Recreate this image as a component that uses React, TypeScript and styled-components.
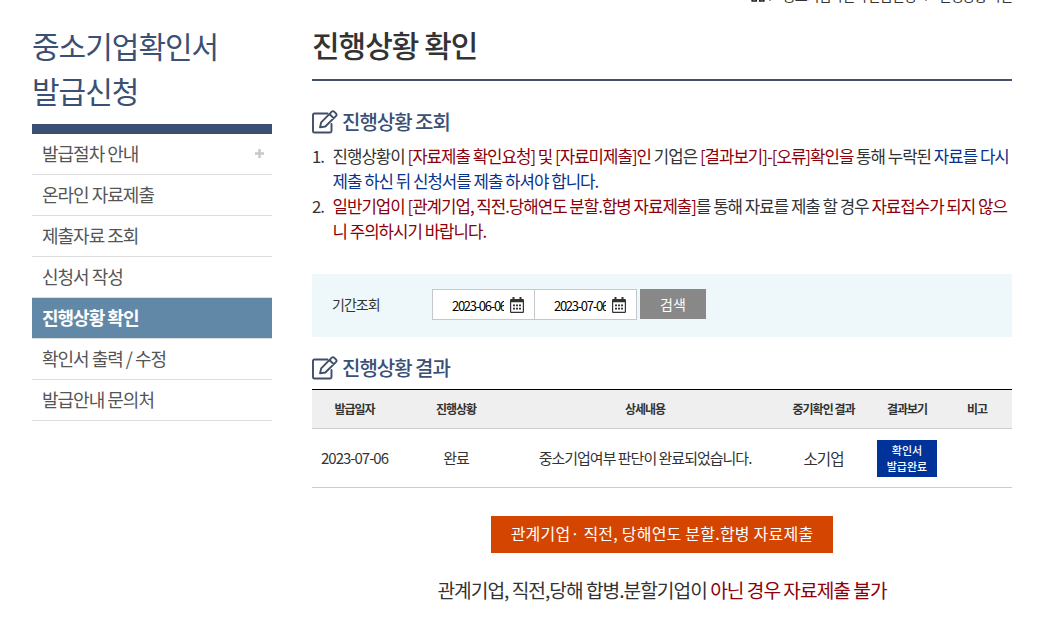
import React, { useState } from "react";
import styled, { createGlobalStyle } from "styled-components";

const GlobalStyle = createGlobalStyle`
  * {
    box-sizing: border-box;
  }

  body {
    margin: 0;
    background: #fff;
    color: #333;
    font-family: "Noto Sans CJK KR", "Noto Sans", sans-serif;
    letter-spacing: -1px;
    overflow: hidden;
  }

  button,
  input {
    font-family: inherit;
  }
`;

// 레이아웃
const Page = styled.div`
  display: flex;
  gap: 40px;
  width: 1014px;
  height: 628px;
  padding-left: 32px;
  overflow: hidden;
`;

const Sidebar = styled.aside`
  width: 240px;
  flex-shrink: 0;
  padding-top: 23px;
`;

const SidebarTitle = styled.h2`
  margin: 0;
  height: 101px;
  font-size: 30px;
  font-weight: 400;
  line-height: 45px;
  color: #3a5074;
`;

const Menu = styled.ul`
  list-style: none;
  margin: 0;
  padding: 0;
  border-top: 10px solid #3a5074;
`;

const MenuItem = styled.li<{ $active?: boolean }>`
  display: flex;
  align-items: center;
  justify-content: space-between;
  height: 41px;
  padding: 0 8px 2px 10px;
  border-bottom: 1px solid #ddd;
  font-size: 18px;
  font-weight: ${({ $active }) => ($active ? 700 : 400)};
  color: ${({ $active }) => ($active ? "#fff" : "#555")};
  background: ${({ $active }) => ($active ? "#6288a8" : "transparent")};
  cursor: pointer;
`;

const Content = styled.main`
  width: 700px;
  flex-shrink: 0;
`;

const Breadcrumb = styled.div`
  display: flex;
  align-items: center;
  justify-content: flex-end;
  gap: 8px;
  height: 20px;
  margin-top: -15px;
  font-size: 14px;
  line-height: 20px;
  white-space: nowrap;
`;

const PageTitle = styled.h1`
  margin: 0 0 26px;
  height: 76px;
  padding-top: 17px;
  border-bottom: 2px solid #444f68;
  font-size: 30px;
  font-weight: 500;
  line-height: 45px;
`;

const SectionTitle = styled.h3`
  display: flex;
  align-items: center;
  gap: 4px;
  margin: 0;
  height: 30px;
  font-size: 20px;
  font-weight: 500;
  line-height: 30px;
  color: #3a5074;
`;

// 안내 문구
const NoticeList = styled.ol`
  list-style: none;
  margin: 7px 0 0;
  padding: 0;
  font-size: 16.8px;
  line-height: 25px;
`;

const NoticeItem = styled.li`
  display: grid;
  grid-template-columns: 20.5px 1fr;
  white-space: nowrap;
`;

const Red = styled.span`
  color: #8c0009;
`;

const Blue = styled.span`
  color: #0a3289;
`;

// 조회 조건
const SearchBox = styled.form`
  display: flex;
  align-items: center;
  height: 63px;
  margin: 30px 0 16px;
  padding: 0 20px 2px;
  background: #eef7fa;
`;

const SearchLabel = styled.label`
  width: 100px;
  padding-bottom: 1px;
  font-size: 14px;
`;

const DateField = styled.div`
  display: flex;
  align-items: center;
  gap: 5px;
  width: 103px;
  height: 31px;
  padding: 2px 0 0 19px;
  border: 1px solid #c3c8cc;
  background: #fff;

  & + & {
    margin-left: -1px;
  }
`;

const DateInput = styled.input`
  width: 52px;
  padding: 0 0 1px;
  border: 0;
  outline: 0;
  font-size: 13px;
  letter-spacing: -1.3px;
  color: #000;
`;

const SearchButton = styled.button`
  width: 66px;
  height: 30px;
  margin: 0 0 1px 3px;
  padding: 0 0 1px;
  border: 0;
  background: #888;
  color: #fff;
  font-size: 14px;
`;

// 결과 테이블
const Table = styled.table`
  width: 100%;
  margin-top: 6px;
  border-collapse: collapse;
  table-layout: fixed;
  border-top: 1px solid #000;
  text-align: center;
`;

const Th = styled.th<{ $width: number }>`
  width: ${({ $width }) => $width}px;
  height: 39px;
  padding: 0 0 1px;
  border-bottom: 1px solid #ccc;
  background: #efefef;
  font-size: 12px;
  font-weight: 700;
`;

const Td = styled.td<{ $large?: boolean }>`
  height: 59px;
  padding: 0 0 1px;
  border-bottom: 1px solid #ccc;
  font-size: ${({ $large }) => ($large ? 15.6 : 15)}px;
`;

const ResultButton = styled.button`
  display: block;
  width: 60px;
  height: 37px;
  margin: 1px auto 0;
  padding: 0 0 1px;
  border: 0;
  background: #003399;
  color: #fff;
  font-size: 11px;
  font-weight: 500;
  line-height: 16px;
`;

const Bottom = styled.div`
  display: flex;
  flex-direction: column;
  align-items: center;
  margin-top: 28px;
`;

const SubmitButton = styled.button`
  width: 342px;
  height: 37px;
  padding: 0 0 3px;
  border: 0;
  background: #d34500;
  color: #fff;
  font-size: 16px;
  letter-spacing: 0.22px;
  white-space: nowrap;
`;

const BottomNotice = styled.p`
  margin: 23px 0 0;
  font-size: 19.2px;
  line-height: 28px;
`;

const EditIcon = () => (
  <svg width="26" height="25" viewBox="0 0 26 25" fill="none" stroke="#3f4d68">
    <path
      d="M15.5 3.5H2.3A1.3 1.3 0 0 0 1 4.8v16.4A1.3 1.3 0 0 0 2.3 22.5H18a1.5 1.5 0 0 0 1.5-1.5V14"
      strokeWidth="1.9"
      strokeLinecap="round"
    />
    <path
      d="M8 17.4l1.2-5L19.8 1.6a1.6 1.6 0 0 1 2.3 0l2 2a1.6 1.6 0 0 1 0 2.3L13.3 16.5zM17.5 4l4.3 4.3"
      strokeWidth="1.9"
      strokeLinejoin="round"
    />
  </svg>
);

const CalendarIcon = () => (
  <svg width="16" height="17" viewBox="0 0 16 17" fill="#333">
    <path
      fillRule="evenodd"
      d="M3.5 0h2v2h5V0h2v2h1.2A1.3 1.3 0 0 1 15 3.3v11.4a1.3 1.3 0 0 1-1.3 1.3H2.3A1.3 1.3 0 0 1 1 14.7V3.3A1.3 1.3 0 0 1 2.3 2h1.2zM2.2 5.2v9.6h11.6V5.2z"
    />
    <path d="M4 7.5h2v1.8H4zM7 7.5h2v1.8H7zM10 7.5h2v1.8h-2zM4 10.8h2v1.8H4zM7 10.8h2v1.8H7zM10 10.8h2v1.8h-2z" />
  </svg>
);

const PlusIcon = () => (
  <svg width="9" height="9" viewBox="0 0 9 9">
    <path d="M4.5 0v9M0 4.5h9" stroke="#c8c8c8" strokeWidth="2.5" />
  </svg>
);

const HomeIcon = styled(({ className }: { className?: string }) => (
  <svg
    className={className}
    width="14"
    height="14"
    viewBox="0 0 14 14"
    fill="none"
    stroke="#222"
  >
    <path
      d="M.8 6.5L7 1l6.2 5.5M1.2 6v7h4V8.5h3.6V13h4V6"
      strokeWidth="1.7"
    />
  </svg>
))`
  margin-right: -5px;
`;

const ArrowIcon = () => (
  <svg width="7" height="14" viewBox="0 0 7 14" fill="none" stroke="#333">
    <path d="M1.5 5.5l4 3.5-4 3.5" strokeWidth="1.2" />
  </svg>
);

const menus = [
  "발급절차 안내",
  "온라인 자료제출",
  "제출자료 조회",
  "신청서 작성",
  "진행상황 확인",
  "확인서 출력 / 수정",
  "발급안내 문의처",
];

const columns = [
  { label: "발급일자", width: 85 },
  { label: "진행상황", width: 118 },
  { label: "상세내용", width: 260 },
  { label: "중기확인 결과", width: 97 },
  { label: "결과보기", width: 70 },
  { label: "비고", width: 70 },
];

const App: React.FC = () => {
  const [startDate, setStartDate] = useState("2023-06-06");
  const [endDate, setEndDate] = useState("2023-07-06");

  return (
    <>
      <GlobalStyle />
      <Page>
        <Sidebar>
          <SidebarTitle>
            중소기업확인서
            <br />
            발급신청
          </SidebarTitle>
          <Menu>
            {menus.map((menu, index) => (
              <MenuItem key={menu} $active={menu === "진행상황 확인"}>
                {menu}
                {index === 0 && <PlusIcon />}
              </MenuItem>
            ))}
          </Menu>
        </Sidebar>
        <Content>
          <Breadcrumb>
            <HomeIcon />
            <ArrowIcon />
            <span>중소기업확인서 발급신청</span>
            <ArrowIcon />
            <span>진행상황 확인</span>
          </Breadcrumb>
          <PageTitle>진행상황 확인</PageTitle>
          <SectionTitle>
            <EditIcon />
            진행상황 조회
          </SectionTitle>
          <NoticeList>
            <NoticeItem>
              <span>1.</span>
              <span>
                진행상황이 <Red>[자료제출 확인요청] 및 [자료미제출]인</Red>{" "}
                기업은 <Red>[결과보기]-[오류]확인을</Red> 통해 누락된{" "}
                <Blue>
                  자료를 다시
                  <br />
                  제출 하신 뒤 신청서를 제출 하셔야 합니다.
                </Blue>
              </span>
            </NoticeItem>
            <NoticeItem>
              <span>2.</span>
              <span>
                <Red>일반기업이 [관계기업, 직전.당해연도 분할.합병 자료제출]</Red>
                를 통해 자료를 제출 할 경우{" "}
                <Red>
                  자료접수가 되지 않으
                  <br />
                  니 주의하시기 바랍니다.
                </Red>
              </span>
            </NoticeItem>
          </NoticeList>
          <SearchBox onSubmit={(e) => e.preventDefault()}>
            <SearchLabel>기간조회</SearchLabel>
            <DateField>
              <DateInput
                value={startDate}
                onChange={(e) => setStartDate(e.target.value)}
              />
              <CalendarIcon />
            </DateField>
            <DateField>
              <DateInput
                value={endDate}
                onChange={(e) => setEndDate(e.target.value)}
              />
              <CalendarIcon />
            </DateField>
            <SearchButton>검색</SearchButton>
          </SearchBox>
          <SectionTitle>
            <EditIcon />
            진행상황 결과
          </SectionTitle>
          <Table>
            <thead>
              <tr>
                {columns.map(({ label, width }) => (
                  <Th key={label} $width={width}>
                    {label}
                  </Th>
                ))}
              </tr>
            </thead>
            <tbody>
              <tr>
                <Td>2023-07-06</Td>
                <Td>완료</Td>
                <Td>중소기업여부 판단이 완료되었습니다.</Td>
                <Td $large>소기업</Td>
                <Td>
                  <ResultButton>
                    확인서
                    <br />
                    발급완료
                  </ResultButton>
                </Td>
                <Td />
              </tr>
            </tbody>
          </Table>
          <Bottom>
            <SubmitButton>관계기업· 직전, 당해연도 분할.합병 자료제출</SubmitButton>
            <BottomNotice>
              관계기업, 직전,당해 합병.분할기업이 <Red>아닌 경우 자료제출 불가</Red>
            </BottomNotice>
          </Bottom>
        </Content>
      </Page>
    </>
  );
};

export default App;
